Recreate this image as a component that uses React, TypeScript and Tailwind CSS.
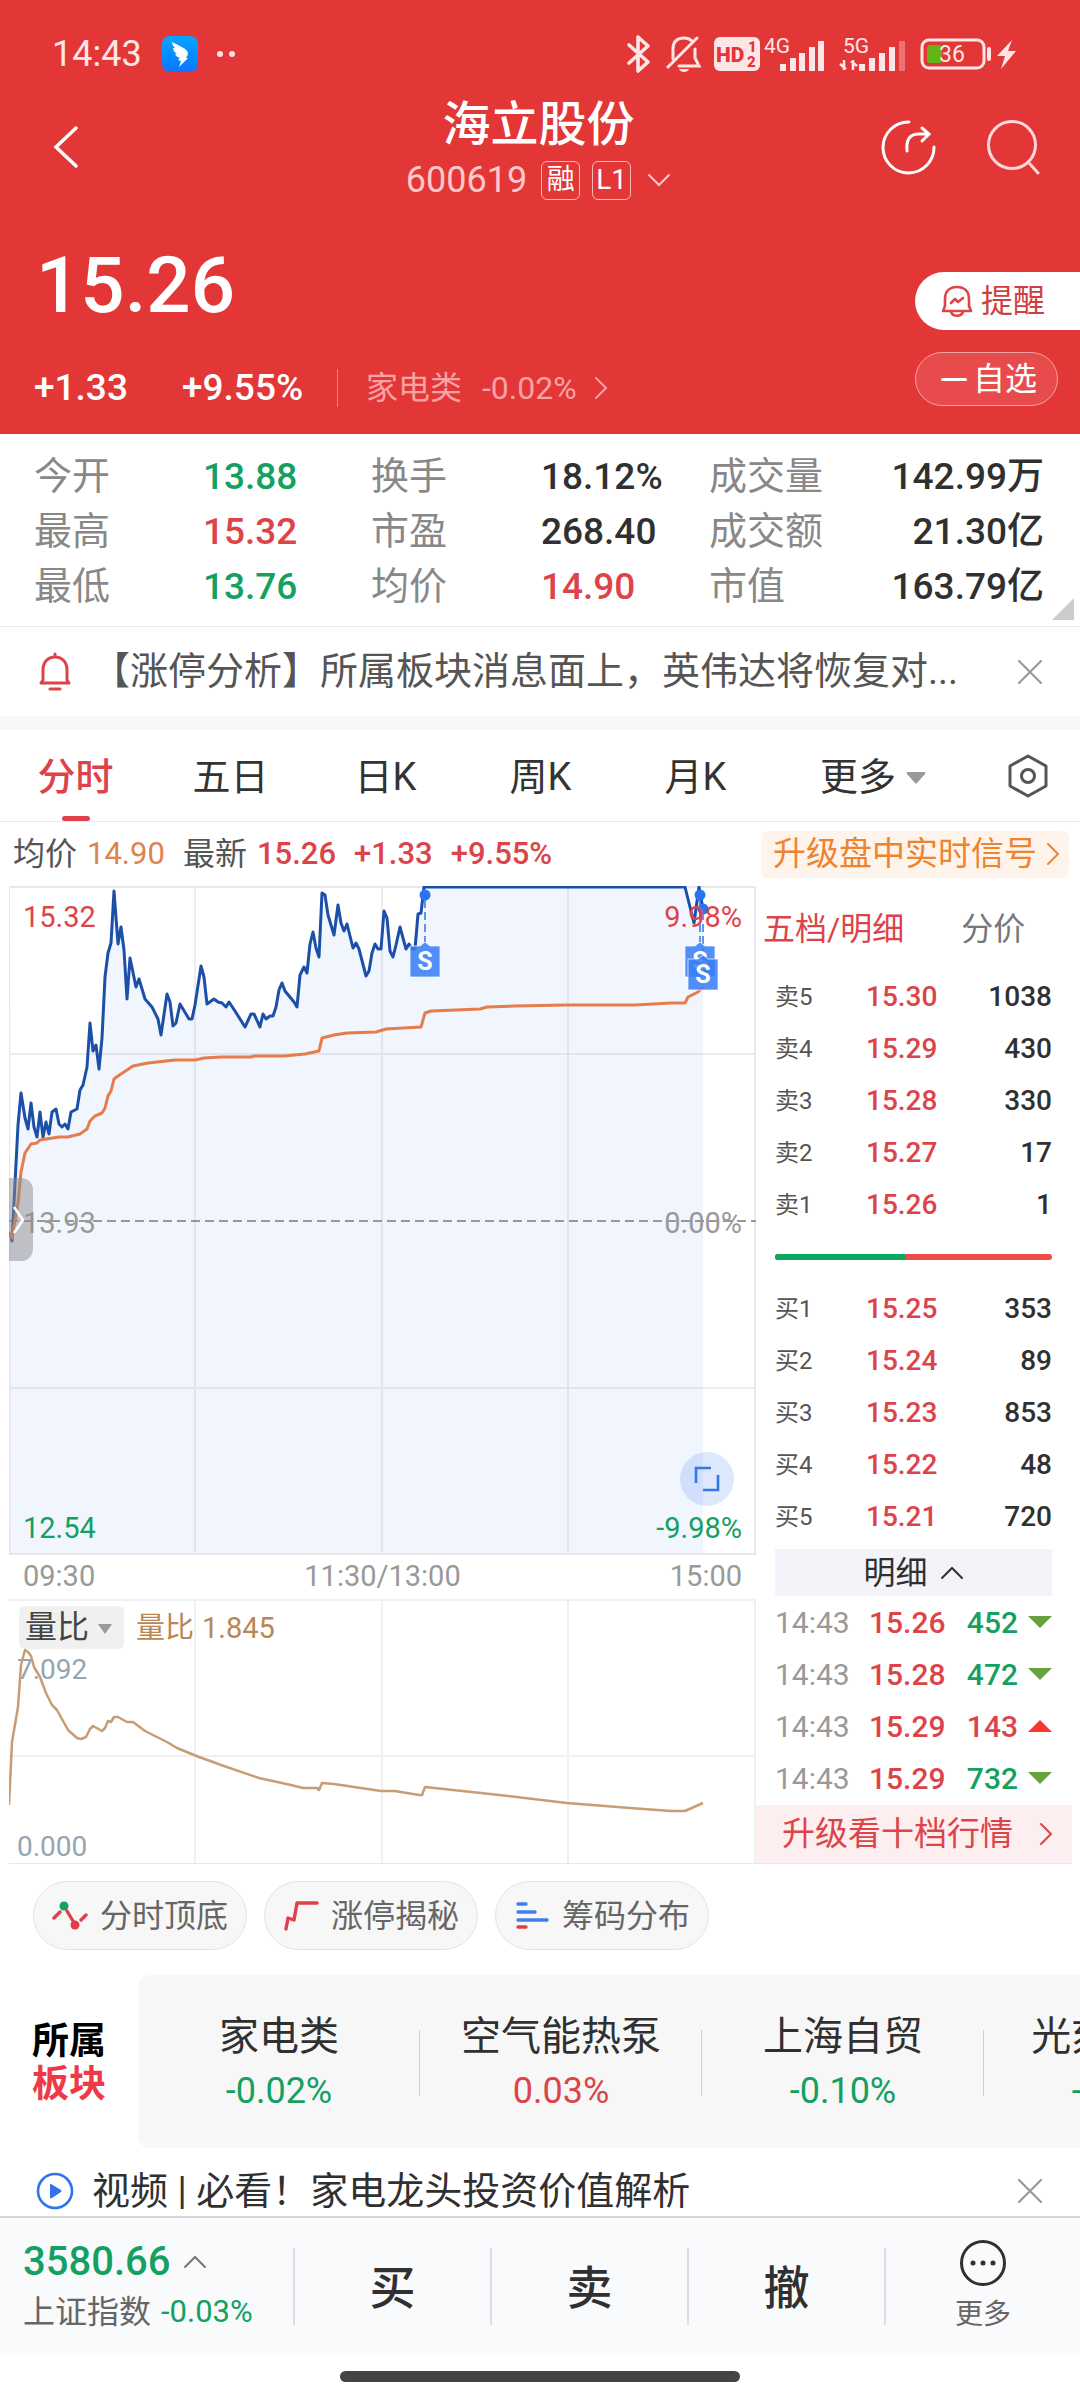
import { useState } from 'react';
import type { ReactNode } from 'react';

type Tone = 'up' | 'down' | 'plain';

const toneClass: Record<Tone, string> = {
    up: 'text-[#dc444a]',
    down: 'text-[#14a060]',
    plain: 'text-[#303030]',
};

const stats: [string, string, Tone][] = [
    ['今开', '13.88', 'down'],
    ['换手', '18.12%', 'plain'],
    ['成交量', '142.99万', 'plain'],
    ['最高', '15.32', 'up'],
    ['市盈', '268.40', 'plain'],
    ['成交额', '21.30亿', 'plain'],
    ['最低', '13.76', 'down'],
    ['均价', '14.90', 'up'],
    ['市值', '163.79亿', 'plain'],
];

const tabs = ['分时', '五日', '日K', '周K', '月K'];

const sells = [
    ['卖5', '15.30', '1038'],
    ['卖4', '15.29', '430'],
    ['卖3', '15.28', '330'],
    ['卖2', '15.27', '17'],
    ['卖1', '15.26', '1'],
];

const buys = [
    ['买1', '15.25', '353'],
    ['买2', '15.24', '89'],
    ['买3', '15.23', '853'],
    ['买4', '15.22', '48'],
    ['买5', '15.21', '720'],
];

const ticks: [string, string, string, Tone][] = [
    ['14:43', '15.26', '452', 'down'],
    ['14:43', '15.28', '472', 'down'],
    ['14:43', '15.29', '143', 'up'],
    ['14:43', '15.29', '732', 'down'],
];

const boards: [string, string, Tone][] = [
    ['家电类', '-0.02%', 'down'],
    ['空气能热泵', '0.03%', 'up'],
    ['上海自贸', '-0.10%', 'down'],
    ['光刻机(胶)', '-0.41%', 'down'],
];

const priceLine =
    '10,346 12,355 18,239 21,207 25,232 28,243 31,217 34,241 37,251 40,226 43,251 46,236 49,248 52,226 56,223 59,238 62,241 65,238 68,243 71,226 77,223 80,204 83,199 87,181 90,137 93,165 96,159 99,183 102,152 105,91 108,67 111,57 114,5 118,58 121,41 124,64 127,113 130,72 136,101 139,93 145,113 152,121 158,133 161,149 167,108 170,116 173,140 176,137 180,118 189,133 192,133 195,119 201,80 204,91 207,118 214,113 218,116 222,117 226,121 229,116 235,125 245,141 251,128 254,128 260,141 263,128 266,133 270,130 273,130 276,121 279,104 282,97 285,105 294,116 297,121 300,89 304,81 307,87 310,58 313,46 316,62 319,71 322,7 325,9 328,29 334,49 338,19 341,37 344,45 347,38 353,62 356,57 359,63 366,90 369,85 372,67 375,58 378,63 381,63 384,25 387,32 390,65 393,71 396,59 400,41 406,63 409,58 413,64 415,63 418,28 421,27 424,1 685,1 694,37 699,1 703,23';

const averageLine =
    '10,346 12,352 18,317 21,286 25,267 31,258 37,257 40,254 59,251 68,251 80,248 87,243 90,235 95,230 102,227 105,222 108,210 111,205 114,193 118,190 133,180 148,177 175,174 195,174 204,172 221,171 251,171 254,170 284,170 305,168 319,165 322,152 334,149 347,147 376,146 386,143 421,141 425,127 431,125 480,123 487,121 514,120 567,119 635,119 671,117 685,117 688,111 698,106 703,101';

const ratioLine =
    '9,206 12,143 18,108 21,66 25,51 28,53 31,57 34,68 40,78 46,94 52,106 57,111 68,131 77,139 81,140 86,138 90,130 93,127 102,132 105,129 108,122 111,123 114,118 118,118 127,123 133,123 145,132 167,143 177,149 199,158 213,163 221,166 259,179 291,186 303,189 317,189 319,191 322,184 334,185 381,192 395,192 419,196 422,196 425,188 490,195 567,204 630,209 671,212 685,212 703,204';

function Chevron({ dir, className }: { dir: 'left' | 'right' | 'up' | 'down'; className: string }) {
    const paths = {
        left: 'M17 2 L7 12 L17 22',
        right: 'M7 2 L17 12 L7 22',
        up: 'M2 17 L12 7 L22 17',
        down: 'M2 7 L12 17 L22 7',
    };
    return (
        <svg viewBox="0 0 24 24" className={className} fill="none" stroke="currentColor" strokeWidth="2" strokeLinecap="round" aria-hidden="true">
            <path d={paths[dir]} />
        </svg>
    );
}

function CloseIcon() {
    return (
        <svg viewBox="0 0 26 26" className="size-[26px]" stroke="#999" strokeWidth="2.2" strokeLinecap="round" aria-hidden="true">
            <path d="M2 2 L24 24 M24 2 L2 24" />
        </svg>
    );
}

function StatusBar() {
    return (
        <div className="flex h-24 items-center justify-between pl-[52px] pr-[60px] pt-3 text-[#ffe6e6]">
            <div className="flex items-center">
                <span className="text-[36px]">14:43</span>
                <svg viewBox="0 0 36 36" className="ml-5 size-9" aria-hidden="true">
                    <defs>
                        <linearGradient id="ding" x1="0" y1="0" x2="0" y2="1">
                            <stop offset="0" stopColor="#08a5ff" />
                            <stop offset="1" stopColor="#0a76ff" />
                        </linearGradient>
                    </defs>
                    <rect width="36" height="36" rx="8" fill="url(#ding)" />
                    <path d="M10 6 C15 9 22 11 25 15 C27 18 25 20 24 22 L26 22 L17 31 L19 25 L16 24 L18 22 C15 21 14 20 13 18 L15 18 C12 16 11 14 11 12 L13 12 C11 10 10 8 10 6Z" fill="#fff" />
                </svg>
                <svg viewBox="0 0 20 8" className="ml-[18px] h-2 w-5" fill="currentColor" aria-hidden="true">
                    <circle cx="4" cy="4" r="3" />
                    <circle cx="16" cy="4" r="3" />
                </svg>
            </div>
            <div className="flex items-center">
                <svg viewBox="0 0 26 40" className="h-10 w-[26px]" fill="none" stroke="currentColor" strokeWidth="3.6" strokeLinejoin="round" strokeLinecap="round" aria-hidden="true">
                    <path d="M3 11 L22 28 L12 37 V3 L22 12 L3 29" />
                </svg>
                <svg viewBox="0 0 36 40" className="ml-3.5 h-10 w-9" fill="none" stroke="currentColor" strokeWidth="3" strokeLinecap="round" aria-hidden="true">
                    <path d="M7 25 V15 C7 7 12 4 18 4 C21 4 24 5 26 7 M29 15 V24 L33 32 H13" />
                    <path d="M2 33 L31 4" />
                    <path d="M13 35 H23 C22 39 14 39 13 35Z" fill="currentColor" stroke="none" />
                </svg>
                <svg viewBox="0 0 46 34" className="ml-3 h-[34px] w-[46px]" aria-hidden="true">
                    <rect width="46" height="34" rx="6" fill="currentColor" />
                    <g fill="#e33637" fontFamily="Roboto" fontWeight="900">
                        <text x="2" y="25" fontSize="21">HD</text>
                        <text x="34" y="15" fontSize="15">1</text>
                        <text x="33" y="30" fontSize="15">2</text>
                    </g>
                </svg>
                <svg viewBox="0 0 144 36" className="ml-1 h-9 w-36 overflow-visible" fill="currentColor" aria-hidden="true">
                    <g fontFamily="Roboto" fontSize="21">
                        <text x="0" y="17">4G</text>
                        <text x="79" y="17">5G</text>
                    </g>
                    <g stroke="currentColor" strokeWidth="6">
                        <path d="M19 35 V28 M29 35 V22 M38 35 V17 M48 35 V11 M57 35 V5" />
                        <path d="M98 35 V28 M108 35 V22 M118 35 V17 M128 35 V11" />
                        <path d="M138 35 V5" opacity="0.35" />
                    </g>
                    <path d="M80 24 V34 M82 33 L76 28 M89 34 V24 M87 25 L93 30" stroke="currentColor" strokeWidth="2.5" />
                </svg>
                <svg viewBox="0 0 100 36" className="ml-3 h-9 w-[100px]" aria-hidden="true">
                    <rect x="2" y="4" width="62" height="28" rx="7" fill="none" stroke="currentColor" strokeWidth="3" />
                    <rect x="7" y="9" width="15" height="18" rx="3" fill="#62b515" />
                    <text x="32" y="26" textAnchor="middle" fontFamily="Roboto" fontSize="23" fill="currentColor">36</text>
                    <path d="M69 13 V23" stroke="currentColor" strokeWidth="4" strokeLinecap="round" />
                    <path d="M92 4 L77 20 H85 L81 33 L96 15 H88Z" fill="currentColor" />
                </svg>
            </div>
        </div>
    );
}

function Header() {
    return (
        <header className="bg-[#e33637] text-white">
            <StatusBar />
            <div className="grid grid-cols-[1fr_auto_1fr] items-center pl-9 pr-[39px]">
                <button type="button" aria-label="返回" className="mb-1.5 justify-self-start">
                    <svg viewBox="0 0 54 44" className="h-11 w-[54px]" fill="none" stroke="currentColor" strokeWidth="3.5" strokeLinecap="round">
                        <path d="M40 3 L20 22 L40 41" />
                    </svg>
                </button>
                <div className="flex flex-col items-center">
                    <h1 className="text-[48px] font-medium leading-[58px]">海立股份</h1>
                    <button type="button" className="mt-0.5 flex h-12 items-center text-[#ffc9c9]">
                        <span className="text-4xl">600619</span>
                        <span className="ml-3.5 flex size-[39px] items-center justify-center rounded-md border border-[#ffb5b5] text-[28px] text-white">融</span>
                        <span className="ml-3 flex size-[39px] items-center justify-center rounded-md border border-[#ffb5b5] text-[28px] text-white">L1</span>
                        <Chevron dir="down" className="ml-4 size-6" />
                    </button>
                </div>
                <div className="mb-1.5 flex items-center gap-12 justify-self-end">
                    <button type="button" aria-label="分享">
                        <svg viewBox="0 0 56 56" className="size-14" fill="none" stroke="currentColor" strokeWidth="3" strokeLinecap="round">
                            <path d="M28 3 A25.5 25.5 0 1 0 53 28" />
                            <path d="M26 32 C25 20 29 15 38 15 H48 M41 9 L48 15 L41 22" />
                        </svg>
                    </button>
                    <button type="button" aria-label="搜索">
                        <svg viewBox="0 0 56 56" className="size-14" fill="none" stroke="#ffd9d9" strokeWidth="3" strokeLinecap="round">
                            <circle cx="27" cy="26" r="23.5" />
                            <path d="M45 45 L53 54" />
                        </svg>
                    </button>
                </div>
            </div>
            <div className="flex justify-between pb-[26px]">
                <div className="pl-[34px] pt-[42px]">
                    <div className="pl-0.5 text-[78px] font-medium leading-20">15.26</div>
                    <div className="mt-[42px] flex h-10 items-center">
                        <span className="w-[148px] text-[37px] font-medium">+1.33</span>
                        <span className="w-[155px] text-[37px] font-medium">+9.55%</span>
                        <a href="#sector" className="flex h-[38px] items-center border-l border-[#f07f80] pl-7 text-[32px] text-[#f9a3a3]">
                            家电类
                            <span className="ml-5">-0.02%</span>
                            <Chevron dir="right" className="ml-3 size-6" />
                        </a>
                    </div>
                </div>
                <div className="flex flex-col items-start gap-[22px] pt-[68px]">
                    <button type="button" className="flex h-[58px] items-center gap-2 rounded-l-full bg-white pl-[26px] pr-[35px] text-[32px] text-[#cf3f42]">
                        <svg viewBox="0 0 32 32" className="size-8" fill="none" stroke="#dc444a" strokeWidth="2.6" strokeLinejoin="round" strokeLinecap="round" aria-hidden="true">
                            <path d="M4 21 V14 C4 6 9 2 16 2 C23 2 28 6 28 14 V21 L30 26 H2 Z" />
                            <path d="M10 27 C12 32 20 32 22 27" />
                            <path d="M10 18 L14 14 L17 17 L22 13" />
                        </svg>
                        提醒
                    </button>
                    <button type="button" className="flex h-[54px] items-center gap-1.5 rounded-full border border-[#f4a3a3] bg-[#e84b4c] pl-[25px] pr-5 text-[32px]">
                        <span className="h-[3px] w-[26px] rounded-full bg-white" />
                        自选
                    </button>
                </div>
            </div>
        </header>
    );
}

function Stats() {
    return (
        <section className="relative border-b border-[#ebebeb] pb-3 pl-[34px] pr-9 pt-[15px]">
            <dl className="grid grid-cols-[169fr_168fr_170fr_168fr_335fr] leading-[55px]">
                {stats.map(([label, value, tone], i) => (
                    <div key={label} className={i % 3 === 2 ? 'flex justify-between' : 'contents'}>
                        <dt className="whitespace-nowrap text-[38px] text-[#888]">{label}</dt>
                        <dd className={`whitespace-nowrap text-[37px] font-medium ${toneClass[tone]}`}>{value}</dd>
                    </div>
                ))}
            </dl>
            <svg viewBox="0 0 22 22" className="absolute bottom-1.5 right-1.5 size-[22px]" aria-hidden="true">
                <path d="M22 0 V22 H0Z" fill="#ccc" />
            </svg>
        </section>
    );
}

function NewsBar() {
    return (
        <div className="flex h-[89px] items-center pl-9 pr-[37px]">
            <svg viewBox="0 0 38 40" className="h-10 w-[38px] shrink-0" fill="none" stroke="#dc444a" strokeWidth="3" strokeLinecap="round" strokeLinejoin="round" aria-hidden="true">
                <path d="M7 28 V18 C7 10 12 5 19 5 C26 5 31 10 31 18 V28 L33 31 H5 Z M19 2 V4" />
                <path d="M14 37 H24" />
            </svg>
            <a href="#news" className="ml-[18px] min-w-0 flex-1 truncate text-[38px] text-[#555]">
                【涨停分析】所属板块消息面上，英伟达将恢复对...
            </a>
            <button type="button" aria-label="关闭公告">
                <CloseIcon />
            </button>
        </div>
    );
}

function ChartTabs() {
    const [active, setActive] = useState('分时');
    return (
        <nav className="grid h-[92px] grid-cols-[repeat(5,155fr)_200fr_105fr] border-b border-[#e8e8e8] text-[38px] text-[#333]">
            {tabs.map((tab) => (
                <button
                    key={tab}
                    type="button"
                    onClick={() => setActive(tab)}
                    className={`relative flex items-center justify-center pr-1 pt-1 ${tab === active ? 'font-medium text-[#e0404a]' : ''}`}
                >
                    {tab}
                    {tab === active && <span className="absolute bottom-0 h-[5px] w-7 rounded-full bg-[#e0404a]" />}
                </button>
            ))}
            <button type="button" className="flex items-center justify-center gap-2.5 pr-1 pt-1">
                更多
                <svg viewBox="0 0 20 12" className="h-3 w-5" aria-hidden="true">
                    <path d="M1 0 H19 Q20 1 19 2 L11 11 Q10 12 9 11 L1 2 Q0 1 1 0Z" fill="#999" />
                </svg>
            </button>
            <button type="button" aria-label="设置" className="flex items-center justify-center">
                <svg viewBox="0 0 42 44" className="h-11 w-[42px]" fill="none" stroke="#555" strokeWidth="3" strokeLinejoin="round">
                    <path d="M21 2 L39 12 V32 L21 42 L3 32 V12 Z" />
                    <circle cx="21" cy="22" r="6.5" />
                </svg>
            </button>
        </nav>
    );
}

function InfoRow() {
    return (
        <div className="flex h-16 items-center pl-[13px] pr-[11px] text-[32px]">
            <span className="text-[#555]">均价</span>
            <span className="ml-2.5 text-[31px] text-[#dd8450]">14.90</span>
            <span className="ml-[18px] text-[#555]">最新</span>
            <span className="ml-2.5 flex gap-[18px] text-[31px] font-medium text-[#dc444a]">
                <span>15.26</span>
                <span>+1.33</span>
                <span>+9.55%</span>
            </span>
            <a href="#upgrade" className="ml-auto flex h-[47px] items-center rounded-md bg-[#fff4ec] pl-3 pr-1 text-[33px] text-[#ec8430]">
                升级盘中实时信号
                <Chevron dir="right" className="ml-1 size-6" />
            </a>
        </div>
    );
}

function SellMark({ x, y }: { x: number; y: number }) {
    return (
        <g>
            <path d={`M${x - 15} ${y + 4} H${x - 5} L${x} ${y} L${x + 5} ${y + 4} H${x + 15} V${y + 35} H${x - 15} Z`} fill="#3a80f6" fillOpacity="0.88" stroke="#fff" strokeOpacity="0.7" />
            <text x={x} y={y + 28} textAnchor="middle" fontFamily="Roboto" fontSize="25" fontWeight="700" fill="#fff">S</text>
        </g>
    );
}

function PriceChart() {
    return (
        <div className="relative">
            <svg viewBox="9 0 747 669" preserveAspectRatio="none" className="block h-[669px] w-full" role="img" aria-label="分时走势">
                <path d="M195 0 V669 M382 0 V669 M568 0 V669 M9 168 H756 M9 502 H756" stroke="#ededed" strokeWidth="2" />
                <polygon points={`10,669 ${priceLine} 703,669`} fill="#4080f0" fillOpacity="0.08" />
                <path d="M9 1 H755 V668 H10 Z" fill="none" stroke="#e6e8ec" strokeWidth="2" />
                <path d="M9 335 H756" stroke="#999" strokeWidth="2" strokeDasharray="9 5" />
                <polyline points={priceLine} fill="none" stroke="#1c4fa8" strokeWidth="3" strokeLinejoin="round" />
                <polyline points={averageLine} fill="none" stroke="#e67c4c" strokeWidth="3" strokeLinejoin="round" />
                <path d="M425 14 V56 M700 14 V56 M703 26 V70" stroke="#3573d8" strokeWidth="1.5" strokeDasharray="8 4" />
                <g fill="#2874f5">
                    <circle cx="425" cy="9" r="5.5" />
                    <circle cx="700" cy="9" r="5.5" />
                    <circle cx="703" cy="23" r="5.5" />
                </g>
                <SellMark x={425} y={56} />
                <SellMark x={700} y={56} />
                <SellMark x={703} y={69} />
            </svg>
            <div className="absolute inset-x-3.5 top-3 flex justify-between text-[29px] leading-[38px] text-[#dc444a]">
                <span>15.32</span>
                <span>9.98%</span>
            </div>
            <div className="absolute inset-x-3.5 top-[318px] flex justify-between text-[29px] leading-[38px] text-[#999]">
                <span>13.93</span>
                <span>0.00%</span>
            </div>
            <div className="absolute inset-x-3.5 bottom-2 flex justify-between text-[29px] leading-[38px] text-[#14a060]">
                <span>12.54</span>
                <span>-9.98%</span>
            </div>
            <button type="button" aria-label="展开" className="absolute left-0 top-[292px] flex h-[83px] w-6 items-center rounded-r-xl bg-[#8c8c8c]/50">
                <svg viewBox="0 0 24 30" className="h-[30px] w-6" fill="none" stroke="#fff" strokeWidth="2.5">
                    <path d="M5 2 L14 15 L5 28" />
                </svg>
            </button>
            <button type="button" aria-label="全屏" className="absolute bottom-[49px] right-[22px] flex size-[54px] items-center justify-center rounded-full bg-[#2a70f0]/16">
                <svg viewBox="0 0 26 26" className="size-[26px]" fill="none" stroke="#3478e6" strokeWidth="2.6">
                    <path d="M17 2 H2 V17 M24 9 V24 H9" />
                </svg>
            </button>
        </div>
    );
}

function RatioChart() {
    return (
        <div className="relative">
            <svg viewBox="9 0 747 264" preserveAspectRatio="none" className="block h-[264px] w-full" role="img" aria-label="量比走势">
                <path d="M9 1 H756 M195 0 V264 M382 0 V264 M568 0 V264 M755 0 V264 M9 157 H756" stroke="#f0f0f0" strokeWidth="2" />
            </svg>
            <div className="absolute left-2.5 top-[7px] flex items-center text-[29px] text-[#b98654]">
                <div className="relative">
                    <select aria-label="指标" className="h-[43px] w-[105px] appearance-none rounded-md bg-[#f0f0f0] pl-1.5 text-[32px] leading-[43px] text-[#444]">
                        <option>量比</option>
                    </select>
                    <svg viewBox="0 0 14 10" className="pointer-events-none absolute right-3 top-[18px] h-2.5 w-3.5" aria-hidden="true">
                        <path d="M0 0 H14 L7 10Z" fill="#999" />
                    </svg>
                </div>
                <span className="ml-3">量比</span>
                <span className="ml-2">1.845</span>
            </div>
            <span className="absolute left-2 top-[52px] text-[28px] leading-[38px] text-[#95a5b0]">7.092</span>
            <span className="absolute bottom-0 left-2 text-[28px] leading-[32px] text-[#95a5b0]">0.000</span>
            <svg viewBox="9 0 747 264" preserveAspectRatio="none" className="pointer-events-none absolute inset-0 size-full" aria-hidden="true">
                <polyline points={ratioLine} fill="none" stroke="#c89c74" strokeWidth="2.5" strokeLinejoin="round" />
            </svg>
        </div>
    );
}

function DepthTable({ rows, label }: { rows: string[][]; label: string }) {
    return (
        <table aria-label={label} className="w-full table-fixed font-medium">
            <tbody>
                {rows.map(([level, price, volume]) => (
                    <tr key={level} className="h-[52px]">
                        <th scope="row" className="w-[91px] p-0 text-left text-2xl font-normal text-[#555]">{level}</th>
                        <td className="p-0 text-[28px] text-[#dc444a]">{price}</td>
                        <td className="p-0 text-right text-[28px] text-[#303030]">{volume}</td>
                    </tr>
                ))}
            </tbody>
        </table>
    );
}

function OrderBook() {
    return (
        <aside>
            <div className="flex h-[85px] items-center pl-[7px] text-[32px]">
                <button type="button" className="text-[#dc444a]">五档/明细</button>
                <button type="button" className="ml-[57px] text-[#777]">分价</button>
            </div>
            <div className="pl-[19px] pr-5">
                <DepthTable label="卖盘" rows={sells} />
                <div className="flex h-[52px] items-center">
                    <div className="flex h-1.5 w-full overflow-hidden rounded-full bg-[#ee4b4b]">
                        <div className="w-[47%] bg-[#0aa85c]" />
                    </div>
                </div>
                <DepthTable label="买盘" rows={buys} />
                <button type="button" className="mt-1.5 flex h-[47px] w-full items-center justify-center gap-3 bg-[#f3f4f9] text-[32px] text-[#303030]">
                    明细
                    <Chevron dir="up" className="size-6" />
                </button>
                <table aria-label="成交明细" className="w-full text-[30px]">
                    <tbody>
                        {ticks.map(([time, price, volume, tone], i) => (
                            <tr key={i} className="h-[52px]">
                                <td className="w-[94px] p-0 text-[#999]">{time}</td>
                                <td className="p-0 font-medium text-[#dc444a]">{price}</td>
                                <td className={`p-0 text-right font-medium ${toneClass[tone]}`}>{volume}</td>
                                <td className="w-[34px] p-0 pl-2.5">
                                    <svg viewBox="0 0 24 12" className="h-3 w-6" aria-hidden="true">
                                        {tone === 'up' ? <path d="M0 12 H24 L12 0Z" fill="#fb3434" /> : <path d="M0 0 H24 L12 12Z" fill="#66a33e" />}
                                    </svg>
                                </td>
                            </tr>
                        ))}
                    </tbody>
                </table>
            </div>
            <a href="#level2" className="mt-px flex h-[58px] items-center justify-between bg-[#fdeeef] pl-[26px] pr-3.5 text-[33px] text-[#dc444a]">
                升级看十档行情
                <Chevron dir="right" className="size-6" />
            </a>
        </aside>
    );
}

function Chip({ icon, children }: { icon: ReactNode; children: ReactNode }) {
    return (
        <button type="button" className="flex h-[69px] items-center gap-3 rounded-full border border-[#e3e3e3] bg-[#f7f7f7] pl-[18px] pr-[18px] text-[32px] text-[#666]">
            <svg viewBox="0 0 36 34" className="h-[34px] w-9" fill="none" strokeWidth="3.4" strokeLinecap="round" strokeLinejoin="round" aria-hidden="true">
                {icon}
            </svg>
            {children}
        </button>
    );
}

function Boards() {
    return (
        <section id="sector" className="mt-[25px] flex items-stretch">
            <h2 className="flex w-[138px] shrink-0 flex-col justify-center pl-8 pt-0.5 text-[37px] font-bold leading-[43px] text-black">
                <span>所属</span>
                <span className="text-[#ee3a46]">板块</span>
            </h2>
            <ul className="flex h-[173px] min-w-0 flex-1 items-center overflow-hidden rounded-l-xl bg-[#f7f7f7]">
                {boards.map(([name, change, tone]) => (
                    <li key={name} className="relative flex w-[282px] shrink-0 flex-col items-center pt-1">
                        <span className="text-[40px] leading-[54px] text-[#303030]">{name}</span>
                        <span className={`text-4xl leading-[54px] ${toneClass[tone]}`}>{change}</span>
                        <span className="absolute right-0 top-6 h-[66px] w-px bg-[#d0d0d0]" />
                    </li>
                ))}
            </ul>
        </section>
    );
}

function VideoRow() {
    return (
        <div className="flex h-[68px] items-center overflow-hidden pl-9 pr-[37px] pt-[18px]">
            <svg viewBox="0 0 38 38" className="size-[38px]" aria-hidden="true">
                <circle cx="19" cy="19" r="17" fill="none" stroke="#2f74ee" strokeWidth="2.6" />
                <path d="M15 12 Q14 11 14 13 V25 Q14 27 16 26 L25 20 Q26 19 25 18Z" fill="#2f74ee" />
            </svg>
            <a href="#video" className="ml-[18px] flex-1 text-[38px] leading-[50px] text-[#303030]">视频 | 必看！家电龙头投资价值解析</a>
            <button type="button" aria-label="关闭视频">
                <CloseIcon />
            </button>
        </div>
    );
}

function TradeBar() {
    return (
        <footer className="border-t-2 border-[#d6d6d8] bg-[#f9fafc]">
            <div className="grid h-[137px] grid-cols-[293fr_197fr_197fr_197fr_196fr] items-center">
                <a href="#index" className="pl-[23px]">
                    <span className="flex items-center text-[40px] font-medium leading-[50px] text-[#14a060]">
                        3580.66
                        <Chevron dir="up" className="ml-3 size-6 text-[#777]" />
                    </span>
                    <span className="flex items-center whitespace-nowrap text-[32px] leading-[50px] text-[#666]">
                        上证指数
                        <span className="ml-2.5 text-[31px] text-[#14a060]">-0.03%</span>
                    </span>
                </a>
                {['买', '卖', '撤'].map((name) => (
                    <button key={name} type="button" className="flex h-[77px] items-center justify-center border-l-2 border-[#dcdde0] pt-1 text-[46px] font-medium text-[#303030]">
                        {name}
                    </button>
                ))}
                <button type="button" className="flex h-[77px] flex-col items-center justify-center gap-2 border-l-2 border-[#dcdde0] text-[28px] leading-10 text-[#666]">
                    <svg viewBox="0 0 48 48" className="size-12 shrink-0" aria-hidden="true">
                        <circle cx="24" cy="24" r="21.5" fill="none" stroke="#303030" strokeWidth="3" />
                        <g fill="#303030">
                            <circle cx="14" cy="24" r="2.5" />
                            <circle cx="24" cy="24" r="2.5" />
                            <circle cx="34" cy="24" r="2.5" />
                        </g>
                    </svg>
                    更多
                </button>
            </div>
        </footer>
    );
}

export default function App() {
    return (
        <div className="min-h-screen overflow-x-hidden bg-white font-['Roboto','Noto_Sans_CJK_SC',sans-serif] leading-normal">
            <Header />
            <Stats />
            <NewsBar />
            <div className="h-3.5 bg-[#f7f7f7]" />
            <ChartTabs />
            <InfoRow />
            <main className="ml-[9px] mr-2 grid grid-cols-[minmax(0,1fr)_316px] border-b border-[#e8e8e8]">
                <div>
                    <PriceChart />
                    <div className="flex h-11 items-center justify-between px-3.5 text-[29px] text-[#999]">
                        <span>09:30</span>
                        <span>11:30/13:00</span>
                        <span>15:00</span>
                    </div>
                    <RatioChart />
                </div>
                <OrderBook />
            </main>
            <div className="flex gap-[17px] pl-[33px] pt-[17px]">
                <Chip
                    icon={
                        <>
                            <path d="M2 19 L8 13 M15 12 L21 22 M29 21 L34 16" stroke="#e0404a" />
                            <circle cx="12" cy="7" r="4.5" fill="#14a060" />
                            <circle cx="23" cy="26" r="4.5" fill="#e0404a" />
                        </>
                    }
                >
                    分时顶底
                </Chip>
                <Chip icon={<path d="M3 30 L5 19 L11 21 L14 4 H34" stroke="#e0404a" />}>涨停揭秘</Chip>
                <Chip
                    icon={
                        <>
                            <path d="M4 5 H12 M4 13 H21 M4 21 H33" stroke="#3f7fe8" />
                            <path d="M4 28 H12" stroke="#e0404a" />
                        </>
                    }
                >
                    筹码分布
                </Chip>
            </div>
            <Boards />
            <VideoRow />
            <TradeBar />
            <div className="flex h-[43px] items-center justify-center">
                <div className="h-[11px] w-[37%] rounded-full bg-[#444]" />
            </div>
        </div>
    );
}
